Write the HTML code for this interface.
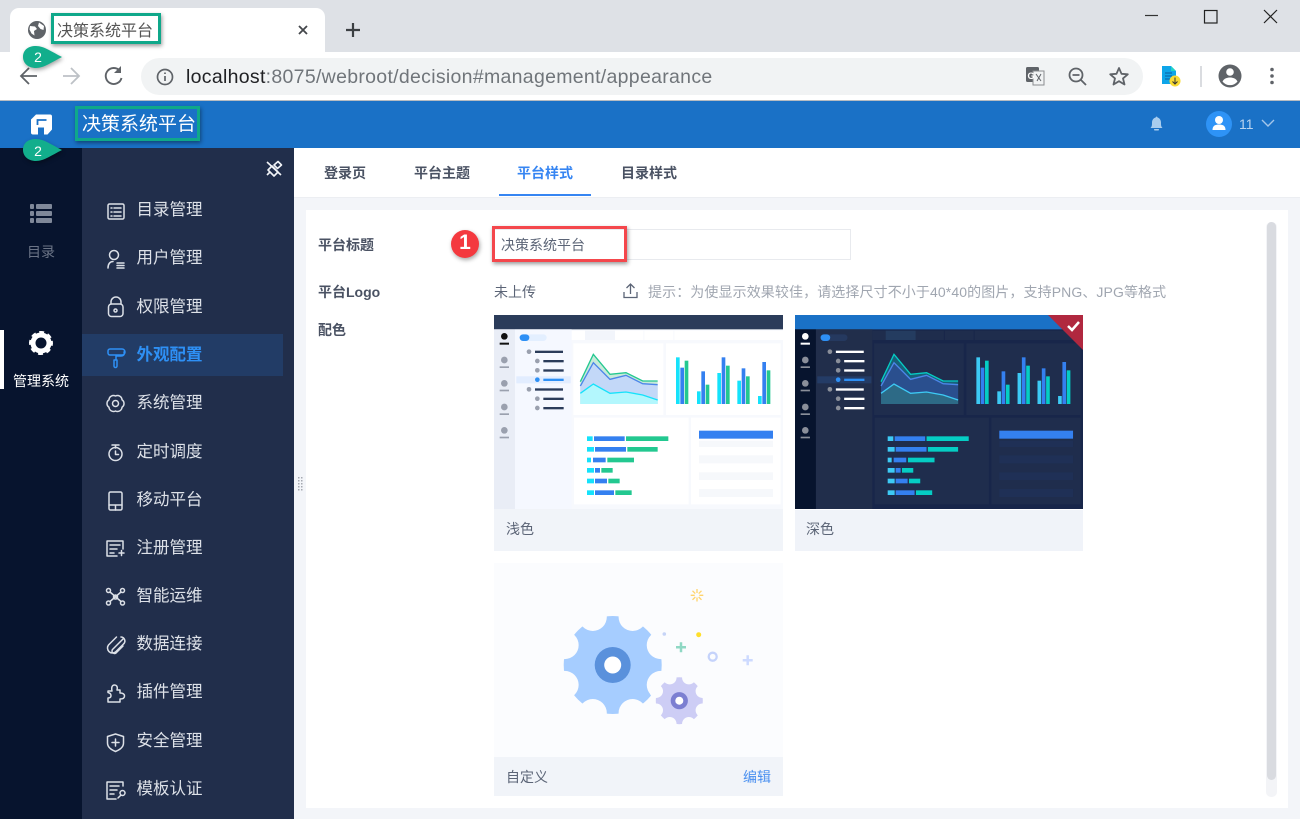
<!DOCTYPE html>
<html lang="zh"><head><meta charset="utf-8"><title>决策系统平台</title>
<style>
html,body{margin:0;padding:0;width:1300px;height:819px;overflow:hidden;background:#fff}
body{position:relative;font-family:"Liberation Sans","Noto Sans CJK SC",sans-serif}
.b{position:absolute}
.t{position:absolute;white-space:nowrap;line-height:20px;height:20px}
svg.o{position:absolute;left:0;top:0}
.s{left:136.5px;font-size:16.5px;color:#dde1e8}
.f{font-size:14px;color:#4a5263;font-weight:700;left:318px}
.tab{font-size:14px;font-weight:700;color:#4a5263;top:163px}
.l{font-size:14px;color:#5b6476}
.tb{fill:var(--tb)}.bg{fill:var(--bg)}.rl{fill:var(--rl)}.sd{fill:var(--sd)}.pn{fill:var(--pn)}.hl{fill:var(--hl)}.th{fill:var(--th)}
.ln{fill:var(--ln)}.c{fill:var(--c)}.bl{fill:#3480f0}.g{fill:var(--g)}.ro{fill:var(--ro)}.a1{fill:var(--a1)}.a2{fill:var(--a2)}.a3{fill:var(--a3)}.d0{fill:var(--d0)}.tg{fill:var(--tg)}.sh{fill:var(--sh)}
.box{position:absolute;box-sizing:border-box;box-shadow:1px 2px 4px rgba(0,0,0,.4)}
.ic{fill:none;stroke:#dce0e7;stroke-width:1.5;stroke-linecap:round;stroke-linejoin:round}
</style></head><body>
<!-- backgrounds -->
<div class="b" style="left:0;top:0;width:1300px;height:52px;background:#dee1e6"></div>
<div class="b" style="left:10px;top:8px;width:315px;height:46px;background:#fff;border-radius:9px 9px 0 0"></div>
<div class="b" style="left:141px;top:58px;width:1002px;height:37px;background:#f1f3f4;border-radius:19px"></div>
<div class="b" style="left:0;top:100px;width:1300px;height:1px;background:#b7bcc2"></div>
<div class="b" style="left:0;top:101px;width:1300px;height:47px;background:#1a71c6"></div>
<div class="b" style="left:0;top:148px;width:82px;height:671px;background:#07142e"></div>
<div class="b" style="left:82px;top:148px;width:212px;height:671px;background:#212e4b"></div>
<div class="b" style="left:82px;top:334px;width:201px;height:42px;background:#223c66"></div>
<div class="b" style="left:0;top:330px;width:4px;height:59px;background:#fff"></div>
<div class="b" style="left:294px;top:148px;width:1006px;height:671px;background:#f3f5f9"></div>
<div class="b" style="left:294px;top:148px;width:1006px;height:50px;background:#fff;border-bottom:1px solid #eceef2;box-sizing:border-box"></div>
<div class="b" style="left:499px;top:194px;width:92px;height:2px;background:#3685f2"></div>
<div class="b" style="left:306px;top:210px;width:982px;height:598px;background:#fff"></div>
<div class="b" style="left:1266px;top:222px;width:11px;height:575px;background:#f3f4f7;border-radius:5px"></div>
<div class="b" style="left:1267px;top:222px;width:9px;height:558px;background:#d9dbe0;border-radius:5px"></div>
<div class="b" style="left:492px;top:229px;width:359px;height:31px;box-sizing:border-box;border:1px solid #e8eaee"></div>
<div class="b" style="left:494px;top:509px;width:289px;height:42px;background:#f1f4f9"></div>
<div class="b" style="left:795px;top:509px;width:288px;height:42px;background:#f0f3f9;border-top:1px solid #fff;box-sizing:border-box"></div>
<div class="b" style="left:494px;top:563px;width:289px;height:194px;background:#fbfcfe"></div>
<div class="b" style="left:494px;top:757px;width:289px;height:39px;background:#f1f4f9"></div>

<svg width="0" height="0" style="position:absolute"><defs>
<symbol id="th" viewBox="12 15 867 582" preserveAspectRatio="none">
<rect class="bg" x="12" y="15" width="867" height="582"/>
<rect class="tb" x="12" y="15" width="867" height="43"/>
<rect class="rl" x="12" y="58" width="63" height="539"/>
<rect class="sd" x="75" y="58" width="170" height="539"/>
<rect class="pn" x="245" y="62" width="634" height="28"/><rect class="th" x="285" y="62" width="90" height="28"/>
<rect class="bg" x="460" y="62" width="3" height="28"/><rect class="bg" x="550" y="62" width="3" height="28"/>
<rect class="pn" x="250" y="100" width="270" height="215"/><rect class="pn" x="528" y="100" width="344" height="215"/>
<rect class="pn" x="252" y="323" width="344" height="260"/><rect class="pn" x="603" y="323" width="269" height="260"/>
<circle class="d0" cx="43" cy="79" r="10"/><rect class="d0" x="29" y="98" width="28" height="6"/>
<g class="ro"><circle cx="43" cy="150" r="10"/><rect x="29" y="169" width="28" height="5"/><circle cx="43" cy="220" r="10"/><rect x="29" y="239" width="28" height="5"/><circle cx="43" cy="291" r="10"/><rect x="29" y="310" width="28" height="5"/><circle cx="43" cy="361" r="10"/><rect x="29" y="380" width="28" height="5"/></g>
<rect class="tg" x="89" y="73" width="81" height="20" rx="10"/><rect x="89" y="73" width="29" height="20" rx="10" fill="#2e90f5"/>
<rect class="hl" x="79" y="199" width="163" height="21"/>
<g class="ro"><circle cx="117" cy="125" r="7"/><circle cx="142" cy="153" r="7"/><circle cx="142" cy="181" r="7"/><circle cx="117" cy="238" r="7"/><circle cx="142" cy="266" r="7"/><circle cx="142" cy="294" r="7"/></g>
<circle cx="142" cy="209" r="7" fill="#2e90f5"/>
<g class="ln"><rect x="135" y="122" width="84" height="7"/><rect x="160" y="150" width="61" height="7"/><rect x="160" y="178" width="61" height="7"/><rect x="135" y="235" width="84" height="7"/><rect x="160" y="263" width="61" height="7"/><rect x="160" y="291" width="61" height="7"/></g>
<rect x="160" y="206" width="61" height="7" fill="#2e90f5"/>
<polygon class="a1" points="271,215 310,133 360,193 408,188 458,213 503,213 503,282 271,282"/>
<polyline fill="none" style="stroke:var(--g)" stroke-width="4" points="271,215 310,133 360,193 408,188 458,213 503,213"/>
<polygon class="a2" points="271,228 310,158 360,208 408,196 458,221 503,224 503,282 271,282"/>
<polyline fill="none" stroke="#4c86ea" stroke-width="4" points="271,228 310,158 360,208 408,196 458,221 503,224"/>
<polygon class="a3" points="271,250 310,222 360,250 408,246 458,255 503,270 503,282 271,282"/>
<polyline fill="none" style="stroke:var(--c)" stroke-width="4" points="271,250 310,222 360,250 408,246 458,255 503,270"/>
<g class="c"><rect x="558" y="142" width="11" height="140"/><rect x="621" y="244" width="11" height="38"/><rect x="682" y="189" width="11" height="93"/><rect x="742" y="212" width="11" height="70"/><rect x="804" y="258" width="11" height="24"/></g>
<g class="bl"><rect x="571" y="173" width="11" height="109"/><rect x="634" y="184" width="11" height="98"/><rect x="695" y="142" width="11" height="140"/><rect x="755" y="175" width="11" height="107"/><rect x="817" y="156" width="11" height="126"/></g>
<g class="g"><rect x="584" y="152" width="11" height="130"/><rect x="647" y="224" width="11" height="58"/><rect x="708" y="167" width="11" height="115"/><rect x="768" y="199" width="11" height="83"/><rect x="830" y="181" width="11" height="101"/></g>
<g class="c"><rect x="291" y="379" width="17" height="14"/><rect x="291" y="411" width="21" height="14"/><rect x="291" y="443" width="12" height="14"/><rect x="291" y="474" width="21" height="14"/><rect x="291" y="506" width="21" height="14"/><rect x="291" y="541" width="21" height="14"/></g>
<g class="bl"><rect x="312" y="379" width="92" height="14"/><rect x="315" y="411" width="93" height="14"/><rect x="309" y="443" width="38" height="14"/><rect x="315" y="474" width="15" height="14"/><rect x="315" y="506" width="36" height="14"/><rect x="315" y="541" width="57" height="14"/></g>
<g class="g"><rect x="408" y="379" width="127" height="14"/><rect x="412" y="411" width="91" height="14"/><rect x="352" y="443" width="80" height="14"/><rect x="334" y="474" width="34" height="14"/><rect x="355" y="506" width="34" height="14"/><rect x="376" y="541" width="49" height="14"/></g>
<rect class="bl" x="627" y="362" width="222" height="24"/>
<g class="sh"><rect x="627" y="392" width="222" height="19"/><rect x="627" y="436" width="222" height="24"/><rect x="627" y="487" width="222" height="23"/><rect x="627" y="537" width="222" height="24"/></g>
</symbol>
</defs></svg>

<svg class="o" width="1300" height="819" viewBox="0 0 1300 819">
<!-- chrome icons -->
<circle cx="37" cy="30" r="9" fill="#5f6368"/><path d="M30 26l5 .5 2 2.500-3 2 .5 4.500-3-2-2-4zM39 22.500l5 3.500-.5 4-3-1-2.500-3z" fill="#fff"/>
<path d="M299 26l8 8M307 26l-8 8" stroke="#44474b" stroke-width="1.800"/>
<path d="M346 30h14M353 23v14" stroke="#3c4043" stroke-width="2.200"/>
<path d="M37 76H22M29 68l-8 8 8 8" fill="none" stroke="#5f6368" stroke-width="1.800"/>
<path d="M63 76h15M71 68l8 8-8 8" fill="none" stroke="#bdc1c6" stroke-width="1.800"/>
<path d="M120 71a8 8 0 1 0 1.500 7" fill="none" stroke="#5f6368" stroke-width="1.900"/><path d="M121 66v7h-7z" fill="#5f6368"/>
<circle cx="165" cy="77" r="7.500" fill="none" stroke="#5f6368" stroke-width="1.700"/><path d="M165 76v5M165 72.500v1.500" stroke="#5f6368" stroke-width="1.700"/>
<rect x="1026" y="67" width="13" height="15" rx="1.500" fill="#5f6368"/><rect x="1033" y="71" width="11" height="14" fill="#f1f3f4" stroke="#8a8d91"/><path d="M1036 74l5 7M1041 74l-4 7" stroke="#5f6368"/>
<text x="1027.500" y="79" font-size="9" font-weight="700" fill="#fff" font-family="Liberation Sans">G</text>
<circle cx="1076" cy="75" r="6.500" fill="none" stroke="#5f6368" stroke-width="1.800"/><path d="M1072.500 75h7M1081 80l5 5" stroke="#5f6368" stroke-width="1.800"/>
<path d="M1119 68l2.500 5.800 6.300.5-4.800 4.100 1.500 6.100-5.500-3.300-5.500 3.300 1.500-6.100-4.800-4.100 6.300-.5z" fill="none" stroke="#5f6368" stroke-width="1.800" stroke-linejoin="round"/>
<path d="M1162 66h9l5 5v13h-14z" fill="#0ea5e9"/><path d="M1171 66l5 5h-5z" fill="#22d3c5"/><path d="M1165 73h7M1165 76h7M1165 79h5" stroke="#0b5a9e" stroke-width="1"/>
<circle cx="1175" cy="81" r="5.500" fill="#fadb33"/><path d="M1175 77.500v6M1172.500 81.500l2.500 2.500 2.500-2.500" fill="none" stroke="#333" stroke-width="1"/>
<rect x="1200" y="66" width="2" height="21" fill="#dadce0"/>
<circle cx="1230" cy="76" r="11.500" fill="#5f6368"/><circle cx="1230" cy="72" r="3.800" fill="#fff"/><path d="M1222.500 81.500c1.500-3 4.500-4 7.500-4s6 1 7.500 4a9.500 9.500 0 0 1-15 0z" fill="#fff"/>
<circle cx="1272" cy="69.500" r="1.800" fill="#5f6368"/><circle cx="1272" cy="76" r="1.800" fill="#5f6368"/><circle cx="1272" cy="82.500" r="1.800" fill="#5f6368"/>
<path d="M1145 15.500h13" stroke="#333" stroke-width="1.200"/><rect x="1204.500" y="10.500" width="12.500" height="12.500" fill="none" stroke="#222" stroke-width="1.200"/><path d="M1264 10l13 13M1277 10l-13 13" stroke="#222" stroke-width="1.200"/>
<!-- header -->
<path d="M36 114.500h14a2 2 0 0 1 2 2v13l-4.500 5H44v-7h-6v7h-5a2 2 0 0 1-2-2v-13z" fill="#fff"/><path d="M37.500 125v-5h9" fill="none" stroke="#1a71c6" stroke-width="1.800"/>
<path d="M1150.500 128c1.500-1.500 1.500-3 1.500-5.500 0-2.500 1.500-4.500 3.700-5 0-1.200 1.800-1.200 1.800 0 2 .5 3.500 2.500 3.500 5 0 2.500 0 4 1.500 5.500z" fill="#a9cdee"/><rect x="1154" y="129" width="5" height="1.500" rx=".7" fill="#a9cdee"/>
<circle cx="1219" cy="124" r="13" fill="#2e93f6"/><circle cx="1219" cy="120" r="4" fill="#fff"/><path d="M1212.500 130c0-4 2.500-5.500 6.500-5.500s6.500 1.500 6.500 5.500z" fill="#fff"/>
<path d="M1262 120l6 6 6-6" fill="none" stroke="#a4c6ea" stroke-width="1.400"/>
<!-- pin -->
<path d="M268 170l6 6 4-4-6-6zM267 162l14 13M278 161.500l3.500 3.500-4 3.500-3.500-3.500zM267 175l3-3" fill="none" stroke="#f2f4f8" stroke-width="1.600" stroke-linejoin="round"/>
<!-- rail -->
<g fill="#7f8899"><rect x="30" y="204" width="4" height="5" rx="1"/><rect x="30" y="211" width="4" height="5" rx="1"/><rect x="30" y="218" width="4" height="5" rx="1"/><rect x="36" y="204" width="16" height="5" rx="1"/><rect x="36" y="211" width="16" height="5" rx="1"/><rect x="36" y="218" width="16" height="5" rx="1"/></g>
<circle cx="41" cy="343" r="8" fill="none" stroke="#fff" stroke-width="5"/><circle cx="41" cy="343" r="10.500" fill="none" stroke="#fff" stroke-width="3" stroke-dasharray="4.700 3.550" transform="rotate(-11 41 343)"/>
<!-- sidebar icons -->
<g class="ic">
<rect x="108" y="204" width="16" height="15" rx="1.500"/><path d="M111 208h1M114 208h7M111 212h1M114 212h7M111 216h1M114 216h7"/>
<circle cx="114" cy="255" r="4.500"/><path d="M108 268c0-4 2-6.500 5-6.500M117 263h7M117 265.500h7M117 268h7"/>
<rect x="108.500" y="304" width="14.500" height="12.500" rx="3"/><path d="M111 304v-2a5 5 0 0 1 10 0v2"/><circle cx="115.500" cy="310.500" r="1.500"/>
<path d="M108 351a2 2 0 0 1 2-2h12a2 2 0 0 1 0 6h-12a2 2 0 0 1-2-2zM124 352c1 3-1 4-3 4h-5v4M114 360h3v6a1.500 1.500 0 0 1-3 0z" stroke="#2e90f5"/>
<path d="M115.500 396A4.500 4.500 0 0 1 122 399.750A4.500 4.500 0 0 1 122 407.250A4.500 4.500 0 0 1 115.500 411A4.500 4.500 0 0 1 109 407.250A4.500 4.500 0 0 1 109 399.750A4.500 4.500 0 0 1 115.500 396Z"/><circle cx="115.500" cy="403.500" r="3"/>
<circle cx="115.500" cy="454" r="6.500"/><path d="M112 445h7M115.500 445v3M115.500 451v3.500h3"/>
<rect x="109" y="492" width="13" height="18" rx="1.500"/><path d="M109 505h13M115.500 505v5"/>
<path d="M123 549v-8h-16v15h10M110 545h10M110 549h7M110 553h4M119 553h5M121.500 550.500v5"/>
<circle cx="108.500" cy="590.500" r="2"/><circle cx="122.500" cy="590.500" r="2"/><circle cx="108.500" cy="603" r="2"/><circle cx="122.500" cy="603" r="2"/><path d="M110 592l11 9.500M121 592l-11 9.500"/><circle cx="115.500" cy="597" r="2"/>
<path d="M123 639l-10.500 10.500a2.500 2.500 0 0 0 3.500 3.500l7-7M121 637a4 4 0 0 1 2.500 7l-8 8a5 5 0 0 1-7-7l8-8"/>
<path d="M108 691h4c-1-5 1-6 2.500-6s3.500 1 2.500 5l3 0v3c3 0 4.500 1 4.500 3s-1.500 3-4.500 3v3h-12v-4c2 0 3-1 3-2.500s-1-2.500-3-3z"/>
<path d="M115.500 734l8 2.500v6.500c0 4-3 6.500-8 8.500-5-2-8-4.500-8-8.500v-6.500zM115.500 739v7M112 742.500h7"/>
<path d="M123 786v-4h-16v17h9M110 786h9M110 790h7M110 794h4M118 798l3-3"/><circle cx="122.500" cy="793" r="2.500"/>
</g>
<!-- drag -->
<g fill="#a5a9b1"><rect x="298" y="477" width="1.500" height="1.500"/><rect x="301" y="477" width="1.500" height="1.500"/><rect x="298" y="480" width="1.500" height="1.500"/><rect x="301" y="480" width="1.500" height="1.500"/><rect x="298" y="483" width="1.500" height="1.500"/><rect x="301" y="483" width="1.500" height="1.500"/><rect x="298" y="486" width="1.500" height="1.500"/><rect x="301" y="486" width="1.500" height="1.500"/><rect x="298" y="489" width="1.500" height="1.500"/><rect x="301" y="489" width="1.500" height="1.500"/></g>
<!-- upload -->
<path d="M624 292v5.500h13V292M630.500 294v-10M626.500 288l4-4 4 4" fill="none" stroke="#5b6476" stroke-width="1.300"/>
<!-- thumbs -->
<use href="#th" x="494" y="315" width="289" height="194" style="filter:blur(.3px);--bg:#f7f9fd;--tb:#2b3c5a;--rl:#e9edf6;--sd:#f5f8ff;--pn:#fff;--hl:#e2edff;--th:#f2f5fb;--ln:#2b3c5a;--c:#15e2fb;--g:#23c890;--ro:#9aa0ae;--a1:#c7ead9;--a2:#c3d8f8;--a3:#b3f7fd;--d0:#111;--tg:#e3efff;--sh:#f6f8fb"/>
<use href="#th" x="795" y="315" width="288" height="194" style="filter:blur(.3px);--bg:#18264a;--tb:#1a71c6;--rl:#07142e;--sd:#212e4b;--pn:#1f2d4d;--hl:#243c66;--th:#243c60;--ln:#fff;--c:#3dcaf5;--g:#05cdc4;--ro:#8a8f9a;--a1:#17607a;--a2:#2a4f8e;--a3:#2d6a86;--d0:#fff;--tg:#25395f;--sh:#1f3056"/>
<path d="M1048 315h35v35z" fill="#b0283f"/><path d="M1068 326l4 4 7-8" fill="none" stroke="#fff" stroke-width="2.500"/>
<!-- gears -->
<g transform="translate(612.700 665)"><circle r="49" fill="#a6cdff"/>
<g fill="#fbfcfe"><circle cx="52" r="14" transform="rotate(22.500)"/><circle cx="52" r="14" transform="rotate(67.500)"/><circle cx="52" r="14" transform="rotate(112.500)"/><circle cx="52" r="14" transform="rotate(157.500)"/><circle cx="52" r="14" transform="rotate(202.500)"/><circle cx="52" r="14" transform="rotate(247.500)"/><circle cx="52" r="14" transform="rotate(292.500)"/><circle cx="52" r="14" transform="rotate(337.500)"/></g>
<circle r="18" fill="#5a91dc"/><circle r="8.500" fill="#fff"/></g>
<g transform="translate(679.300 700.700)"><circle r="24.500" fill="#fbfcfe"/><circle r="23.500" fill="#cdcdf5"/>
<g fill="#fbfcfe"><circle cx="25" r="6.800" transform="rotate(22.500)"/><circle cx="25" r="6.800" transform="rotate(67.500)"/><circle cx="25" r="6.800" transform="rotate(112.500)"/><circle cx="25" r="6.800" transform="rotate(157.500)"/><circle cx="25" r="6.800" transform="rotate(202.500)"/><circle cx="25" r="6.800" transform="rotate(247.500)"/><circle cx="25" r="6.800" transform="rotate(292.500)"/><circle cx="25" r="6.800" transform="rotate(337.500)"/></g>
<circle r="8.600" fill="#7c7fd1"/><circle r="4" fill="#fff"/></g>
<path d="M697 589v4M697 597.500v4M690.700 595.300h4M699.300 595.300h4M692.500 590.800l2.800 2.800M698.700 597l2.800 2.800M701.500 590.800l-2.800 2.800M695.300 597l-2.800 2.800" stroke="#ffd36b" stroke-width="1.300"/>
<circle cx="698.700" cy="634.700" r="2.500" fill="#ffdf2b"/><circle cx="664.300" cy="634" r="1.800" fill="#c6d4f7"/>
<path d="M681 642.300v10M676 647.300h10" stroke="#8fd8c4" stroke-width="2.500"/>
<circle cx="712.700" cy="656.700" r="4" fill="none" stroke="#c5d3fb" stroke-width="2.300"/>
<path d="M747.700 655.300v10M742.700 660.300h10" stroke="#cddaff" stroke-width="2.500"/>
</svg>

<!-- text -->
<div class="t" style="left:57px;top:22px;font-size:16px;color:#555">决策系统平台</div>
<div class="t" style="left:186px;top:67px;font-size:19.500px;letter-spacing:.3px;color:#70757a"><span style="color:#202124">localhost</span>:8075/webroot/decision#management/appearance</div>
<div class="t" style="left:82px;top:115px;font-size:19px;color:#fff">决策系统平台</div>
<div class="t" style="left:1239px;top:114px;font-size:14px;color:#b9d3ef">11</div>
<div class="t" style="left:27px;top:242px;font-size:14px;color:#6b7486">目录</div>
<div class="t" style="left:13px;top:371px;font-size:14px;color:#fff">管理系统</div>
<div class="t s" style="top:200px">目录管理</div>
<div class="t s" style="top:248px">用户管理</div>
<div class="t s" style="top:297px">权限管理</div>
<div class="t s" style="top:345px;color:#2e90f5;font-weight:700">外观配置</div>
<div class="t s" style="top:393px">系统管理</div>
<div class="t s" style="top:442px">定时调度</div>
<div class="t s" style="top:490px">移动平台</div>
<div class="t s" style="top:538px">注册管理</div>
<div class="t s" style="top:586px">智能运维</div>
<div class="t s" style="top:634px">数据连接</div>
<div class="t s" style="top:682px">插件管理</div>
<div class="t s" style="top:731px">安全管理</div>
<div class="t s" style="top:779px">模板认证</div>
<div class="t tab" style="left:324px">登录页</div>
<div class="t tab" style="left:414px">平台主题</div>
<div class="t tab" style="left:517px;color:#3685f2">平台样式</div>
<div class="t tab" style="left:621px">目录样式</div>
<div class="t f" style="top:235px">平台标题</div>
<div class="t f" style="top:282px">平台Logo</div>
<div class="t f" style="top:320px">配色</div>
<div class="t l" style="left:501px;top:235px">决策系统平台</div>
<div class="t l" style="left:494px;top:282px">未上传</div>
<div class="t" style="left:648px;top:282px;font-size:14px;letter-spacing:.1px;color:#a0a6b0">提示：为使显示效果较佳，请选择尺寸不小于40*40的图片，支持PNG、JPG等格式</div>
<div class="t l" style="left:506px;top:519px">浅色</div>
<div class="t l" style="left:806px;top:519px">深色</div>
<div class="t l" style="left:506px;top:767px">自定义</div>
<div class="t" style="left:743px;top:767px;font-size:14px;color:#4a90f0">编辑</div>

<!-- annotations -->
<div class="box" style="left:51px;top:13px;width:110px;height:31px;border:3px solid #0fa88a"></div>
<div class="box" style="left:75px;top:106px;width:125px;height:35px;border:3px solid #0fa88a"></div>
<div class="box" style="left:492px;top:226px;width:135px;height:36px;border:3px solid #f4474c"></div>
<svg class="o" width="1300" height="819" viewBox="0 0 1300 819" style="filter:drop-shadow(1px 2px 2px rgba(0,0,0,.35))">
<path d="M62 57C52 62 44 68 36 68 28 68 23 63 23 57 23 50 28 46 36 46 44 46 52 52 62 57Z" fill="#12ae8c"/>
<path d="M62 150C52 155 44 161 36 161 28 161 23 156 23 150 23 143 28 139 36 139 44 139 52 145 62 150Z" fill="#12ae8c"/>
<circle cx="465" cy="244" r="14" fill="#f4393f"/>
</svg>
<div class="t" style="left:33px;top:47px;font-size:14px;color:#fff;width:10px;text-align:center">2</div>
<div class="t" style="left:33px;top:141px;font-size:14px;color:#fff;width:10px;text-align:center">2</div>
<div class="t" style="left:455px;top:233px;font-size:21px;font-weight:700;color:#fff;width:20px;text-align:center">1</div>
</body></html>
